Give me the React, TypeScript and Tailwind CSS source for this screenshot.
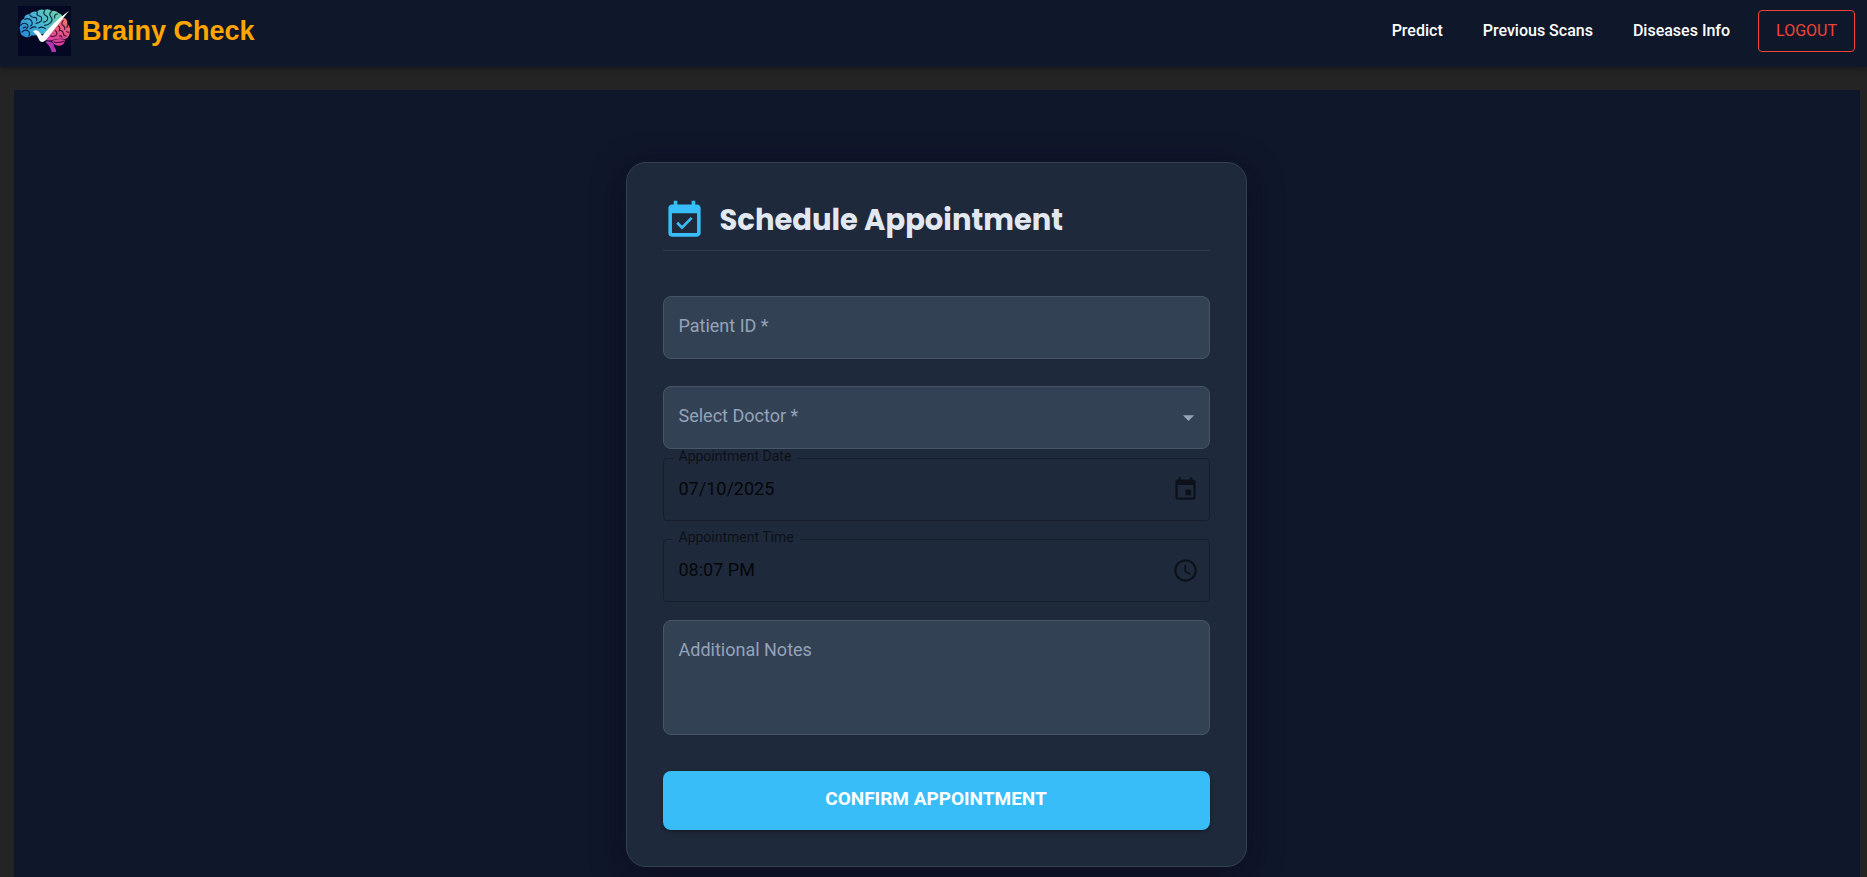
import { useState } from "react";
import type { ReactNode } from "react";
import { MdAccessTime, MdArrowDropDown, MdEvent, MdEventAvailable } from "react-icons/md";

function Logo() {
  return (
    <svg viewBox="0 0 159 150" className="h-[50px] w-[53px] shrink-0" aria-hidden="true">
      <defs>
        <linearGradient id="left-lobe" x1="0" y1="0.7" x2="1" y2="0.2">
          <stop offset="0" stopColor="#2b8fd6" />
          <stop offset="0.45" stopColor="#45b5d3" />
          <stop offset="1" stopColor="#6fd3a4" />
        </linearGradient>
        <linearGradient id="right-lobe" x1="0.6" y1="0" x2="0.3" y2="1">
          <stop offset="0" stopColor="#f0746c" />
          <stop offset="0.6" stopColor="#e4557f" />
          <stop offset="1" stopColor="#d43fa0" />
        </linearGradient>
      </defs>
      <rect width="159" height="150" fill="#040823" />
      <path
        d="M84 106 Q98 104 106 112 Q108 124 114 132 V138 H101 Q98 122 84 110 Z"
        fill="#b035b0"
      />
      <path
        d="M102 104 Q120 96 141 101 Q140 118 124 119 Q108 119 102 104 Z"
        fill="#da3f9b"
      />
      <path
        d="M112 58 Q124 38 138 36 Q149 40 148 53 Q158 64 156 78 Q154 94 142 99 Q122 96 104 102 Q88 106 80 100 Z"
        fill="url(#right-lobe)"
      />
      <path
        d="M22 93 Q6 88 7 76 Q2 66 7 56 Q6 43 18 38 Q20 25 34 25 Q42 14 56 17 Q66 8 79 12 Q92 7 101 15 Q115 12 122 22 Q134 24 132 36 L98 72 Q84 86 68 84 Q54 90 42 88 Q34 96 22 93 Z"
        fill="url(#left-lobe)"
      />
      <path
        d="M8 58 Q16 48 26 54 Q34 60 26 68 M12 78 Q22 68 32 76 Q38 84 32 90 M20 40 Q32 34 40 44 Q46 54 38 60 M36 27 Q40 36 50 34 Q58 34 56 44 M58 18 Q54 28 64 30 Q74 32 70 44 Q64 52 54 52 M80 14 Q74 22 82 28 Q92 32 88 42 Q82 50 76 48 M100 17 Q92 22 98 32 Q106 40 98 50 Q90 58 80 58 M118 24 Q108 24 110 36 M36 68 Q46 60 54 64 M62 66 Q74 60 82 68 M16 66 Q20 62 24 64"
        fill="none"
        stroke="#0b2347"
        strokeWidth="3.4"
        strokeLinecap="round"
      />
      <path
        d="M136 44 Q128 50 134 58 Q142 62 140 70 M148 56 Q150 62 146 64 M122 60 Q128 66 124 74 Q134 72 136 82 Q136 90 144 90 M112 74 Q120 80 114 88 Q106 94 98 90 M154 78 Q148 80 146 76 M124 90 Q130 88 132 94 M108 108 Q124 112 138 106"
        fill="none"
        stroke="#4d0f3d"
        strokeWidth="3.4"
        strokeLinecap="round"
      />
      <path
        d="M45 76 Q52 70 60 74 Q68 82 73 89 Q104 50 153 14 Q118 58 83 103 Q73 112 65 104 Q58 86 45 76 Z"
        fill="#fff"
      />
    </svg>
  );
}

const filledBox =
  "peer block w-full rounded-lg border border-[#475569] bg-[#334155] px-[15px] text-lg text-[#e2e8f0] outline-none focus:border-[#38bdf8]";
const restingLabel =
  "pointer-events-none absolute left-4 top-[17px] text-lg leading-[26px] text-[#94a3b8]";

interface PickerProps {
  id: string;
  label: string;
  initial: string;
  action: string;
  icon: ReactNode;
}

function PickerField({ id, label, initial, action, icon }: PickerProps) {
  const [value, setValue] = useState(initial);
  return (
    <div className="relative flex h-[63px] items-center rounded border border-black/25 pr-[10px]">
      <label
        htmlFor={id}
        className="absolute -top-[10px] left-[9px] bg-[#1e293b] px-[6px] text-sm leading-[14px] text-black/60"
      >
        {label}
      </label>
      <input
        id={id}
        value={value}
        onChange={(e) => setValue(e.target.value)}
        className="h-full min-w-0 flex-1 bg-transparent pb-[2px] pl-[15px] text-lg text-black/85 outline-none"
      />
      <button type="button" aria-label={action} className="text-[27px] text-black/55">
        {icon}
      </button>
    </div>
  );
}

export default function App() {
  const [doctor, setDoctor] = useState("");

  return (
    <div className="flex min-h-screen flex-col bg-[#242424] font-['Roboto',sans-serif]">
      <header className="flex h-[67px] items-center justify-between bg-[#0f172a] pb-[5px] pl-[18px] pr-3 shadow-[0_2px_6px_rgba(0,0,0,0.35)]">
        <a href="#home" className="flex items-center gap-[11px]">
          <Logo />
          <span className="font-['Liberation_Sans',Arial,sans-serif] text-[27px] font-bold leading-9 text-[#ffa500]">
            Brainy Check
          </span>
        </a>
        <div className="flex items-center gap-7">
          <nav className="flex items-center gap-10 text-base font-medium text-white">
            <a href="#predict">Predict</a>
            <a href="#scans">Previous Scans</a>
            <a href="#diseases">Diseases Info</a>
          </nav>
          <button
            type="button"
            className="h-[42px] rounded border border-[#f44336] px-[17px] text-base text-[#f44336]"
          >
            LOGOUT
          </button>
        </div>
      </header>

      <main className="ml-[14px] mr-[7px] mt-[23px] flex flex-1 flex-col items-center bg-[#0f172a] pb-[10px] pl-4 pr-[18px] pt-[72px]">
        <section className="w-full max-w-[621px] rounded-[20px] border border-[#334155] bg-[#1e293b] p-9 shadow-[0_8px_32px_rgba(13,8,26,0.6)]">
          <div className="flex items-center gap-[14px] border-b border-[#334155]/70 pb-2">
            <MdEventAvailable className="size-[43px] shrink-0 text-[#38bdf8]" />
            <h1 className="font-['Poppins','Inter',sans-serif] text-[29px] font-bold leading-[43px] text-[#e2e8f0]">
              Schedule Appointment
            </h1>
          </div>

          <form className="mt-[45px] flex flex-col" onSubmit={(e) => e.preventDefault()}>
            <div className="relative">
              <input id="patient" required placeholder=" " className={`${filledBox} h-[63px]`} />
              <label htmlFor="patient" className={`${restingLabel} peer-[:not(:placeholder-shown)]:hidden`}>
                Patient ID *
              </label>
            </div>

            <div className="relative mt-[27px]">
              <select
                id="doctor"
                required
                value={doctor}
                onChange={(e) => setDoctor(e.target.value)}
                className={`${filledBox} h-[63px] appearance-none`}
              >
                <option value="" />
              </select>
              <label htmlFor="doctor" className={restingLabel}>
                Select Doctor *
              </label>
              <MdArrowDropDown className="pointer-events-none absolute right-2 top-[18px] size-[27px] text-[#94a3b8]" />
            </div>

            <div className="mt-[9px] flex flex-col gap-[18px]">
              <PickerField
                id="date"
                label="Appointment Date"
                initial="07/10/2025"
                action="Choose date"
                icon={<MdEvent />}
              />
              <PickerField
                id="time"
                label="Appointment Time"
                initial="08:07 PM"
                action="Choose time"
                icon={<MdAccessTime />}
              />
              <div className="relative">
                <textarea
                  id="notes"
                  placeholder=" "
                  className={`${filledBox} h-[115px] resize-none py-4`}
                />
                <label htmlFor="notes" className={`${restingLabel} peer-[:not(:placeholder-shown)]:hidden`}>
                  Additional Notes
                </label>
              </div>
            </div>

            <button
              type="submit"
              className="mt-9 h-[59px] rounded-lg bg-[#38bdf8] pb-[2px] text-[19px] font-bold text-white shadow-[0_2px_4px_rgba(0,0,0,0.3)]"
            >
              CONFIRM APPOINTMENT
            </button>
          </form>
        </section>
      </main>
    </div>
  );
}
